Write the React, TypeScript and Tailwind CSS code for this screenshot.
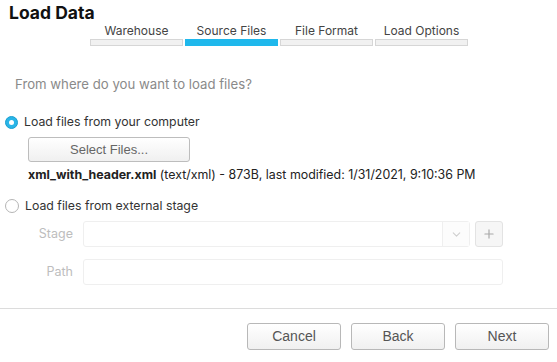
import { ChevronDown, Plus } from 'lucide-react'

const tabs = [
  { label: 'Warehouse', active: false },
  { label: 'Source Files', active: true },
  { label: 'File Format', active: false },
  { label: 'Load Options', active: false },
]

function Radio({ checked }: { checked: boolean }) {
  return checked ? (
    <span className="flex h-[13px] w-[13px] items-center justify-center rounded-full border border-[#1a9fd0] bg-[#29b5e8]">
      <span className="h-[5px] w-[5px] rounded-full bg-white" />
    </span>
  ) : (
    <span className="h-[14px] w-[14px] rounded-full border border-[#b5b5b5] bg-white" />
  )
}

function FooterBtn({ children }: { children: string }) {
  return (
    <button className="h-[27px] w-[94px] rounded-[3px] border border-[#b8b8b8] bg-gradient-to-b from-white to-[#f0f0f0] text-[14px] text-[#555] font-['Liberation_Sans',Arial,sans-serif]">
      {children}
    </button>
  )
}

export default function App() {
  return (
    <div className="flex h-[362px] w-[557px] flex-col bg-white text-[#333] font-['Inter','Noto_Sans',sans-serif]">
      {/* header */}
      <div className="px-[9px] pt-[2px]">
        <h1 className="text-[17.5px] font-bold leading-[22px] text-[#111]">Load Data</h1>
        <div className="ml-[81px] flex gap-[2px]">
          {tabs.map(t => (
            <div key={t.label} className="w-[93px]">
              <div className="text-center text-[12px] leading-[14px] text-[#444]">{t.label}</div>
              <div className={`mt-[1px] h-[7px] border ${t.active ? 'border-[#1fb8ec] bg-[#1fb8ec]' : 'border-[#d6d6d6] bg-[#f1f1f1]'}`} />
            </div>
          ))}
        </div>
      </div>

      {/* body */}
      <div className="flex-1">
        <p className="ml-[15px] mt-[29px] text-[13.2px] leading-[18px] text-[#8a8a8a]">From where do you want to load files?</p>

        <label className="ml-[5px] mt-[20px] flex items-center gap-[6px]">
          <Radio checked />
          <span className="text-[12.3px] leading-[18px]">Load files from your computer</span>
        </label>
        <button className="ml-[28px] mt-[6px] block h-[25px] w-[162px] rounded-[3px] border border-[#bdbdbd] bg-gradient-to-b from-white to-[#f0f0f0] text-[13px] text-[#666] font-['Liberation_Sans',Arial,sans-serif]">
          Select Files...
        </button>
        <p className="ml-[28px] mt-[5px] text-[12.4px] leading-[16px] text-[#222]">
          <span className="font-bold">xml_with_header.xml</span> (text/xml) - 873B, last modified: 1/31/2021, 9:10:36 PM
        </p>

        <label className="ml-[5px] mt-[14px] flex items-center gap-[6px]">
          <Radio checked={false} />
          <span className="text-[12.3px] leading-[18px]">Load files from external stage</span>
        </label>

        <div className="mt-[6px] flex items-center">
          <span className="w-[74px] pr-[1px] text-right text-[12.5px] text-[#bdbdbd]">Stage</span>
          <div className="ml-[9px] flex h-[26px] w-[387px] rounded-[3px] border border-[#efefef]">
            <div className="flex-1" />
            <div className="flex w-[27px] items-center justify-center border-l border-[#efefef] bg-[#fcfcfc]">
              <ChevronDown size={13} className="text-[#cfcfcf]" />
            </div>
          </div>
          <div className="ml-[5px] flex h-[26px] w-[28px] items-center justify-center rounded-[3px] border border-[#e3e3e3] bg-[#f6f6f6]">
            <Plus size={14} className="text-[#a8a8a8]" />
          </div>
        </div>

        <div className="mt-[12px] flex items-center">
          <span className="w-[74px] pr-[1px] text-right text-[12.5px] text-[#bdbdbd]">Path</span>
          <div className="ml-[9px] h-[26px] w-[420px] rounded-[3px] border border-[#efefef]" />
        </div>
      </div>

      {/* footer */}
      <div className="flex h-[54px] items-start justify-end gap-[10px] border-t border-[#dcdcdc] pr-[8px] pt-[14px]">
        <FooterBtn>Cancel</FooterBtn>
        <FooterBtn>Back</FooterBtn>
        <FooterBtn>Next</FooterBtn>
      </div>
    </div>
  )
}
